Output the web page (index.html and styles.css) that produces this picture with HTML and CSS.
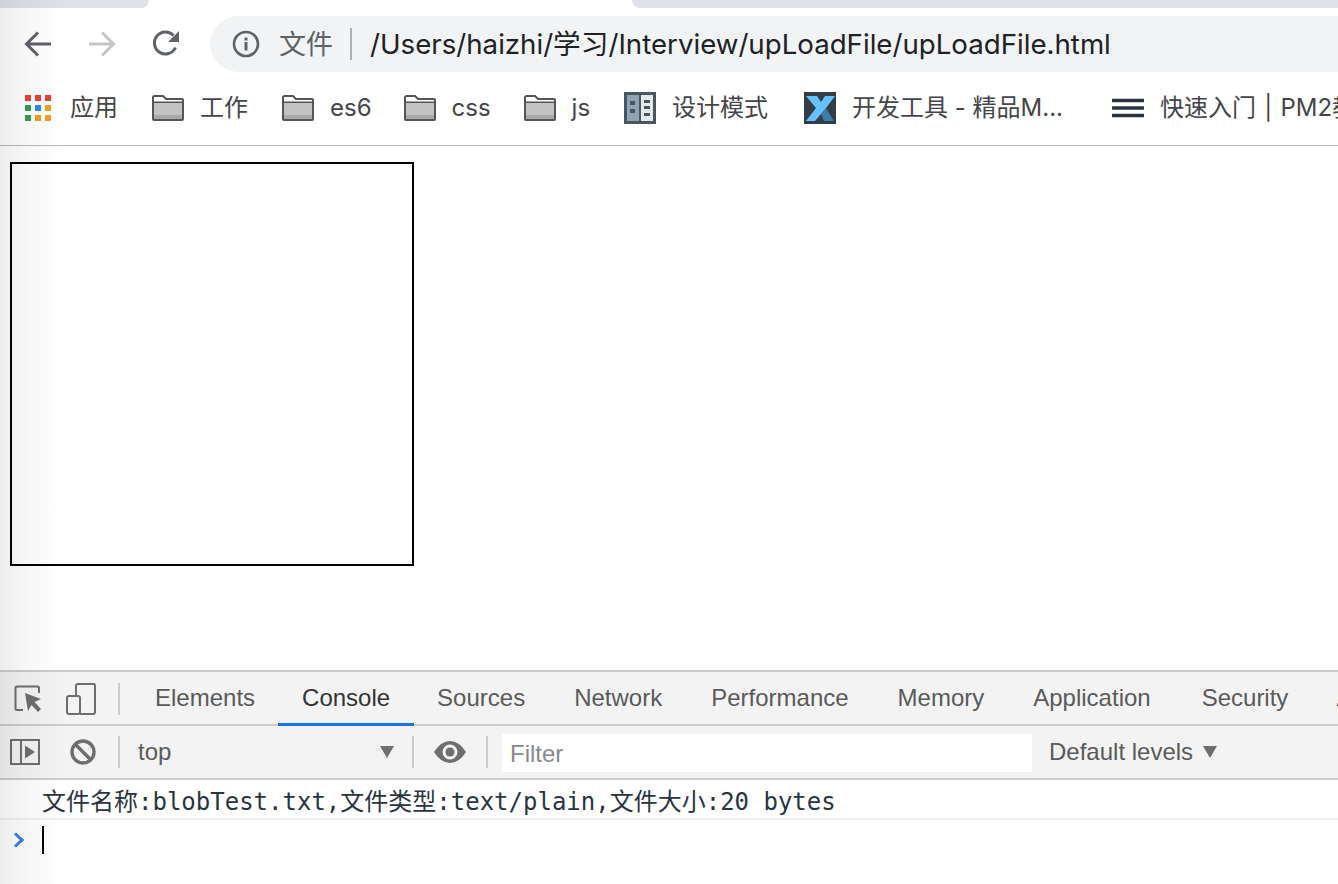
FILE: index.html
```html
<!DOCTYPE html>
<html lang="zh">
<head>
<meta charset="utf-8">
<title>upLoadFile</title>
<link rel="stylesheet" href="styles.css">
</head>
<body>
<div class="app">
  <div class="tabstrip">
    <div class="tab tab-left"></div>
    <div class="tab tab-right"></div>
  </div>
  <div class="toolbar">
    <svg class="nav nav-back" width="28" height="28" viewBox="0 0 28 28"><path d="M27 14H3M14 2.500 2.500 14 14 25.500" fill="none" stroke="#5f6368" stroke-width="3"/></svg>
    <svg class="nav nav-forward" width="28" height="28" viewBox="0 0 28 28"><path d="M1 14H25M14 2.500 25.500 14 14 25.500" fill="none" stroke="#c4c5c7" stroke-width="3"/></svg>
    <svg class="nav nav-reload" width="28" height="28" viewBox="0 0 28 28"><path d="M23.500 17.500A11 11 0 1 1 21.500 5.500" fill="none" stroke="#5f6368" stroke-width="3"/><path d="M27 1V12H16Z" fill="#5f6368"/></svg>
    <div class="omnibox">
      <svg class="info" width="28" height="28" viewBox="0 0 28 28"><circle cx="14" cy="14" r="12" fill="none" stroke="#5f6368" stroke-width="2.600"/><rect x="12.500" y="12" width="3" height="8.500" fill="#5f6368"/><rect x="12.500" y="7.500" width="3" height="3" fill="#5f6368"/></svg>
      <span class="scheme">文件</span>
      <span class="omni-sep"></span>
      <span class="url">/Users/haizhi/学习/Interview/upLoadFile/upLoadFile.html</span>
    </div>
  </div>
  <div class="bookmarks">
    <div class="bm bm-wide">
      <span class="apps">
        <i class="red"></i><i class="red"></i><i class="red"></i>
        <i class="green"></i><i class="blue"></i><i class="orange"></i>
        <i class="green"></i><i class="orange"></i><i class="orange"></i>
      </span>
      <span>应用</span>
    </div>
    <div class="bm bm-wide">
      <svg class="ico" width="32" height="26" viewBox="0 0 32 26"><path d="M1 24V2.500Q1 1 2.500 1H11L14 4H30Q31 4 31 5V24Q31 25 30 25H2Q1 25 1 24Z" fill="#fff" stroke="#555" stroke-width="2"/><rect x="2" y="8" width="28" height="16" fill="#c2c2c2"/><rect x="2" y="20" width="28" height="4" fill="#a9a9a9"/><rect x="2" y="6.500" width="28" height="1.500" fill="#555"/></svg>
      <span>工作</span>
    </div>
    <div class="bm bm-tight">
      <svg class="ico" width="32" height="26" viewBox="0 0 32 26"><path d="M1 24V2.500Q1 1 2.500 1H11L14 4H30Q31 4 31 5V24Q31 25 30 25H2Q1 25 1 24Z" fill="#fff" stroke="#555" stroke-width="2"/><rect x="2" y="8" width="28" height="16" fill="#c2c2c2"/><rect x="2" y="20" width="28" height="4" fill="#a9a9a9"/><rect x="2" y="6.500" width="28" height="1.500" fill="#555"/></svg>
      <span>es6</span>
    </div>
    <div class="bm">
      <svg class="ico" width="32" height="26" viewBox="0 0 32 26"><path d="M1 24V2.500Q1 1 2.500 1H11L14 4H30Q31 4 31 5V24Q31 25 30 25H2Q1 25 1 24Z" fill="#fff" stroke="#555" stroke-width="2"/><rect x="2" y="8" width="28" height="16" fill="#c2c2c2"/><rect x="2" y="20" width="28" height="4" fill="#a9a9a9"/><rect x="2" y="6.500" width="28" height="1.500" fill="#555"/></svg>
      <span>css</span>
    </div>
    <div class="bm bm-wide">
      <svg class="ico" width="32" height="26" viewBox="0 0 32 26"><path d="M1 24V2.500Q1 1 2.500 1H11L14 4H30Q31 4 31 5V24Q31 25 30 25H2Q1 25 1 24Z" fill="#fff" stroke="#555" stroke-width="2"/><rect x="2" y="8" width="28" height="16" fill="#c2c2c2"/><rect x="2" y="20" width="28" height="4" fill="#a9a9a9"/><rect x="2" y="6.500" width="28" height="1.500" fill="#555"/></svg>
      <span>js</span>
    </div>
    <div class="bm bm-wider">
      <svg class="ico" width="32" height="32" viewBox="0 0 32 32"><rect width="32" height="32" fill="#47575f"/><rect x="3" y="3" width="12" height="26" fill="#8ea4b4"/><rect x="17" y="3" width="12" height="26" fill="#e4e9ec"/><rect x="6" y="9" width="5" height="4" fill="#47575f"/><rect x="6" y="17" width="5" height="4" fill="#47575f"/><rect x="20" y="8" width="6" height="3" fill="#47575f"/><rect x="20" y="14" width="6" height="3" fill="#47575f"/><rect x="20" y="21" width="6" height="3" fill="#47575f"/></svg>
      <span>设计模式</span>
    </div>
    <div class="bm bm-widest">
      <svg class="ico" width="32" height="32" viewBox="0 0 32 32"><rect width="32" height="32" fill="#333d47"/><path d="M2 4H13L17 10 21 4H31L22 16 17 22 11 29H2L12 16Z" fill="#66c2ff"/><path d="M17 22 22 16 30 29H20Z" fill="#3d7ba8"/></svg>
      <span>开发工具 - 精品M...</span>
    </div>
    <div class="bm bm-last">
      <svg class="ico" width="32" height="20" viewBox="0 0 32 20"><path d="M1 2.500H31M1 10H31M1 17.500H31" stroke="#29333e" stroke-width="3.400" stroke-linecap="round"/></svg>
      <span>快速入门 | PM2教程</span>
    </div>
  </div>
  <main class="page">
    <div class="dropzone"></div>
  </main>
  <section class="devtools">
    <div class="dt-tabs">
      <svg class="dt-ico ico-inspect" width="28" height="28" viewBox="0 0 28 28"><path d="M9 25H3Q1.500 25 1.500 23.500V3Q1.500 1.500 3 1.500H23.500Q25 1.500 25 3V8" fill="none" stroke="#6e6e6e" stroke-width="2"/><path d="M11 8 27 14 20.500 17 27 24 24 27 17.500 20 14 26Z" fill="#6e6e6e"/></svg>
      <svg class="dt-ico ico-device" width="30" height="32" viewBox="0 0 30 32"><path d="M10 13V3Q10 1 12 1H28Q29 1 29 3V29Q29 31 27 31H14" fill="none" stroke="#6e6e6e" stroke-width="2"/><rect x="1" y="13" width="13" height="18" rx="2" fill="none" stroke="#6e6e6e" stroke-width="2"/></svg>
      <span class="dt-sep sep-tabs"></span>
      <a class="tab-link">Elements</a>
      <a class="tab-link active">Console</a>
      <a class="tab-link">Sources</a>
      <a class="tab-link">Network</a>
      <a class="tab-link">Performance</a>
      <a class="tab-link">Memory</a>
      <a class="tab-link">Application</a>
      <a class="tab-link">Security</a>
      <a class="tab-link">Audits</a>
    </div>
    <div class="dt-bar">
      <svg class="bar-ico ico-side" width="30" height="26" viewBox="0 0 30 26"><rect x="1" y="1" width="28" height="24" fill="none" stroke="#6e6e6e" stroke-width="2"/><rect x="10" y="1" width="2" height="24" fill="#6e6e6e"/><path d="M15 6.500 25 13 15 19.500Z" fill="#6e6e6e"/></svg>
      <svg class="bar-ico ico-block" width="26" height="26" viewBox="0 0 26 26"><circle cx="13" cy="13" r="11" fill="none" stroke="#6e6e6e" stroke-width="3.400"/><path d="M5 5 21 21" stroke="#6e6e6e" stroke-width="3.400"/></svg>
      <span class="dt-sep sep-block"></span>
      <div class="context">
        <span>top</span>
        <svg width="14" height="12" viewBox="0 0 14 12"><path d="M0 0H14L7 12Z" fill="#6e6e6e"/></svg>
      </div>
      <span class="dt-sep sep-context"></span>
      <svg class="bar-ico ico-eye" width="32" height="22" viewBox="0 0 32 22"><path d="M0 11Q7 0 16 0T32 11Q25 22 16 22T0 11Z" fill="#6e6e6e"/><circle cx="16" cy="11" r="7.500" fill="#f3f3f3"/><circle cx="16" cy="11" r="4.500" fill="#6e6e6e"/></svg>
      <span class="dt-sep sep-eye"></span>
      <div class="filter">Filter</div>
      <div class="levels">
        <span>Default levels</span>
        <svg width="14" height="12" viewBox="0 0 14 12"><path d="M0 0H14L7 12Z" fill="#6e6e6e"/></svg>
      </div>
    </div>
    <div class="console">
      <div class="msg">文件名称:blobTest.txt,文件类型:text/plain,文件大小:20 bytes</div>
      <div class="prompt">
        <svg width="12" height="16" viewBox="0 0 12 16"><path d="M2 1.500 9 8 2 14.500" fill="none" stroke="#367cf1" stroke-width="3"/></svg>
        <span class="caret"></span>
      </div>
    </div>
  </section>
  <div class="edge-shade"></div>
</div>
</body>
</html>
```
FILE: styles.css
```css
* { box-sizing: border-box; }
html, body { margin: 0; padding: 0; height: 100%; background: #fff; overflow: hidden; }
.app {
  position: relative;
  width: 1338px;
  height: 884px;
  display: flex;
  flex-direction: column;
  overflow: hidden;
  font-family: Inter, "Noto Sans CJK SC", sans-serif;
}
.edge-shade {
  position: absolute;
  top: 0; left: 0; bottom: 0;
  width: 64px;
  background: linear-gradient(to right, rgba(0,0,0,.07), rgba(0,0,0,.035) 25px, rgba(0,0,0,0));
  pointer-events: none;
}
.tabstrip { height: 8px; display: flex; justify-content: space-between; flex: none; }
.tab { background: #dee1e6; height: 8px; }
.tab-left { width: 149px; border-bottom-right-radius: 10px; }
.tab-right { width: 706px; border-bottom-left-radius: 10px; }
.toolbar { height: 80px; flex: none; display: flex; align-items: flex-start; background: #fff; }
.nav { flex: none; margin-top: 22px; }
.nav-back { margin-left: 24px; }
.nav-forward { margin-left: 36px; }
.nav-reload { margin-left: 36px; }
.omnibox {
  margin-top: 8px;
  margin-left: 30px;
  flex: 1;
  height: 56px;
  background: #f1f3f4;
  border-radius: 28px 0 0 28px;
  display: flex;
  align-items: center;
  padding-left: 22px;
}
.info { flex: none; }
.scheme { margin-left: 19px; margin-top: 2px; font-size: 27px; color: #5f6368; line-height: 34px; }
.omni-sep { width: 2px; height: 32px; background: #b0b2b5; margin-left: 17px; }
.url { margin-left: 18px; font-size: 27.67px; color: #202124; white-space: nowrap; line-height: 34px; }
.bookmarks {
  height: 58px;
  flex: none;
  border-bottom: 1px solid #b9b9b9;
  display: flex;
  align-items: flex-start;
  padding-left: 25px;
  gap: 33px;
  overflow: hidden;
  white-space: nowrap;
  font-size: 24px;
  color: #454649;
}
.bm { display: flex; align-items: center; height: 40px; gap: 16px; flex: none; }
.bm-wide { margin-right: 1px; }
.bm-tight { margin-right: -1px; }
.bm-wider { margin-right: 3px; }
.bm-widest { margin-right: 16px; }
.bm-last { word-spacing: 1.5px; }
.bm span:last-child { line-height: 40px; }
.ico { flex: none; }
.apps {
  width: 26px;
  display: grid;
  grid-template-columns: repeat(3, 6px);
  grid-auto-rows: 6px;
  gap: 4px;
  margin-right: 3px;
}
.apps i { display: block; }
.red { background: #ef3e36; }
.green { background: #34a04f; }
.blue { background: #2b8de8; }
.orange { background: #efa020; }
.page { flex: 1; padding: 16px 10px; background: #fff; min-height: 0; }
.dropzone { width: 404px; height: 404px; border: 2px solid #000; }
.devtools { height: 214px; flex: none; display: flex; flex-direction: column; background: #fff; }
.dt-tabs {
  height: 56px;
  flex: none;
  background: #f3f3f3;
  border-top: 2px solid #ccc;
  box-shadow: inset 0 -2px 0 #ccc;
  display: flex;
  align-items: stretch;
  font-family: "Liberation Sans", sans-serif;
  font-size: 24px;
  color: #5a5a5a;
  white-space: nowrap;
  overflow: hidden;
}
.dt-ico { flex: none; align-self: center; }
.ico-inspect { margin-left: 14px; }
.ico-device { margin-left: 24px; }
.dt-sep { flex: none; width: 2px; height: 32px; background: #ccc; align-self: center; }
.sep-tabs { margin-left: 22px; margin-right: 11px; }
.tab-link {
  flex: none;
  padding: 0 24px;
  display: flex;
  align-items: center;
  height: 54px;
  border-bottom: 3px solid transparent;
}
.tab-link.active { color: #333; border-bottom-color: #1a73e8; }
.tab-link:nth-of-type(1), .tab-link:nth-of-type(2) { margin-right: -1px; }
.tab-link:nth-of-type(3), .tab-link:nth-of-type(4), .tab-link:nth-of-type(5), .tab-link:nth-of-type(6) { margin-right: 1px; }
.tab-link:nth-of-type(7) { margin-right: 3px; }
.dt-bar {
  height: 54px;
  flex: none;
  background: #f3f3f3;
  border-bottom: 2px solid #ccc;
  display: flex;
  align-items: center;
  font-family: "Liberation Sans", sans-serif;
  font-size: 24px;
  color: #5a5a5a;
}
.bar-ico { flex: none; }
.ico-side { margin-left: 10px; }
.ico-block { margin-left: 30px; }
.sep-block { margin-left: 22px; }
.context {
  width: 292px;
  padding: 0 18px 0 18px;
  display: flex;
  align-items: center;
  justify-content: space-between;
}
.sep-eye { margin-left: 20px; }
.ico-eye { margin-left: 20px; }
.filter {
  margin-left: 14px;
  margin-top: 2px;
  width: 530px;
  height: 38px;
  background: #fff;
  padding-left: 8px;
  line-height: 40px;
  color: #8a8a8a;
}
.levels { margin-left: 17px; display: flex; align-items: center; gap: 10px; }
.console { flex: 1; background: #fff; font-family: "DejaVu Sans Mono", "Noto Sans CJK SC", monospace; font-size: 24px; color: #2a3542; }
.msg {
  height: 40px;
  padding-left: 42px;
  line-height: 44px;
  border-bottom: 2px solid #f0f0f0;
  white-space: nowrap;
}
.prompt { display: flex; align-items: center; height: 40px; padding-left: 13px; gap: 17px; }
.caret { width: 2px; height: 28px; background: #000; }
```
